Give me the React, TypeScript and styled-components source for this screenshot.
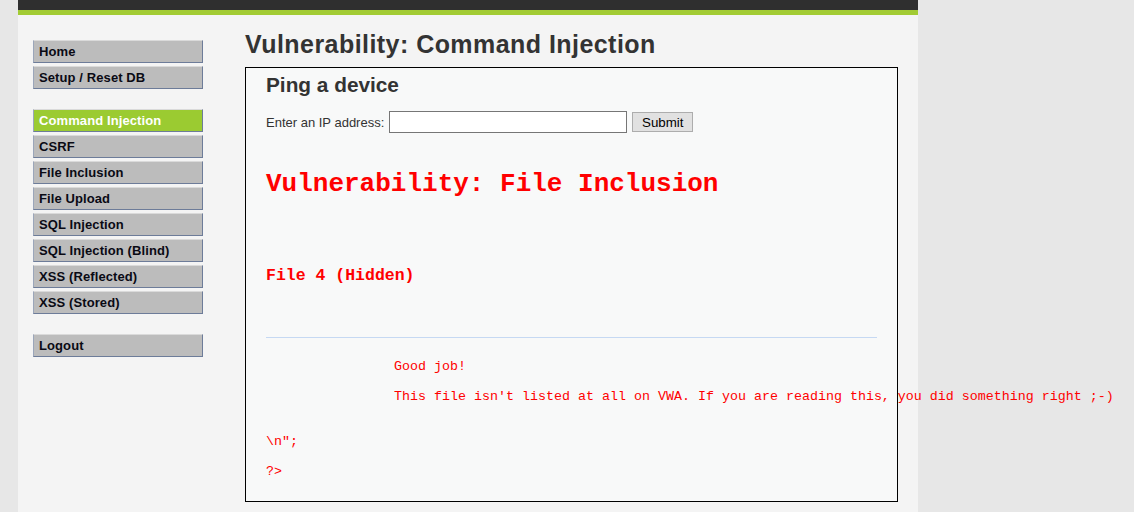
import React from "react";
import styled, { createGlobalStyle } from "styled-components";

const GlobalStyle = createGlobalStyle`
  html, body { margin: 0; padding: 0; }
  body {
    background: #e7e7e7;
    font-family: "Liberation Sans", Arial, Helvetica, sans-serif;
    font-size: 13px;
    color: #333;
  }
`;

const Container = styled.div`
  width: 900px;
  margin-left: 18px;
  min-height: 512px;
  background: #f4f4f4;
`;

const Header = styled.header`
  height: 10px;
  background: #2f2f2f;
  border-bottom: 5px solid #a2cb34;
`;

const Main = styled.div`
  display: flex;
  align-items: flex-start;
`;

const Sidebar = styled.nav`
  width: 200px;
  box-sizing: border-box;
  padding: 25px 15px 0;
  display: flex;
  flex-direction: column;
  gap: 20px;
`;

const MenuGroup = styled.ul`
  list-style: none;
  margin: 0;
  padding: 0;
  display: flex;
  flex-direction: column;
  gap: 3px;
`;

const MenuItem = styled.li<{ $selected?: boolean }>`
  height: 23px;
  box-sizing: border-box;
  line-height: 21px;
  padding-left: 5px;
  border: 1px solid;
  border-color: #dadada #6d7c99 #6d7c99 #9ba6ba;
  background: ${(p) => (p.$selected ? "#9bcb31" : "#bcbcbc")};
  color: ${(p) => (p.$selected ? "#ffffff" : "#0a0a14")};
  font-weight: bold;
  font-size: 13px;
  letter-spacing: 0.1px;
  white-space: nowrap;
`;

const Body = styled.main`
  flex: 1;
  min-width: 0;
  padding: 0 20px 0 27px;
`;

const Title = styled.h1`
  margin: 15px 0 0;
  font-size: 25px;
  letter-spacing: 0.45px;
  line-height: 28px;
  font-weight: bold;
  color: #333;
`;

const Panel = styled.section`
  margin-top: 9px;
  border: 1px solid #000;
  background: #f8f9f9;
  padding: 5px 20px 22px;
`;

const SubTitle = styled.h2`
  margin: 0;
  font-size: 20.8px;
  line-height: 24px;
  font-weight: bold;
  color: #333;
`;

const FormRow = styled.form`
  margin-top: 14px;
  display: flex;
  align-items: center;
  gap: 5px;
  font-size: 13px;
  color: #333;
`;

const TextInput = styled.input`
  width: 238px;
  height: 22px;
  box-sizing: border-box;
  border: 1px solid #767676;
  background: #fff;
  padding: 1px 2px;
  margin: 0;
  font-size: 13px;
`;

const SubmitButton = styled.button`
  width: 61px;
  height: 20px;
  box-sizing: border-box;
  border: 1px solid #adadad;
  background: #e1e1e1;
  color: #000;
  font-family: "Liberation Sans", Arial, sans-serif;
  font-size: 13.33px;
  padding: 0;
  margin: 0;
`;

const RedTitle = styled.div`
  margin-top: 36px;
  font-family: "Liberation Mono", "Courier New", monospace;
  font-weight: bold;
  font-size: 26px;
  line-height: 30px;
  color: #ff0000;
  white-space: pre;
`;

const RedSub = styled.div`
  margin-top: 67px;
  font-family: "Liberation Mono", "Courier New", monospace;
  font-weight: bold;
  font-size: 16.5px;
  line-height: 20px;
  color: #ff0000;
  white-space: pre;
`;

const Divider = styled.div`
  margin-top: 51px;
  border-top: 1px solid #c6d9f3;
`;

const CodeBlock = styled.pre`
  margin: 21px 0 0;
  font-family: "Liberation Mono", "Courier New", monospace;
  font-size: 13.33px;
  line-height: 15px;
  color: #ff0000;
  white-space: pre;
  tab-size: 8;
  overflow: visible;
`;

const menuTop = ["Home", "Setup / Reset DB"];
const menuVulns = [
  "Command Injection",
  "CSRF",
  "File Inclusion",
  "File Upload",
  "SQL Injection",
  "SQL Injection (Blind)",
  "XSS (Reflected)",
  "XSS (Stored)",
];

const codeText =
  "\t\tGood job!\n\n\t\tThis file isn't listed at all on VWA. If you are reading this, you did something right ;-)\n\n\n\\n\";\n\n?>";

export default function App() {
  return (
    <>
      <GlobalStyle />
      <Container>
        <Header />
        <Main>
          <Sidebar>
            <MenuGroup>
              {menuTop.map((m) => (
                <MenuItem key={m}>{m}</MenuItem>
              ))}
            </MenuGroup>
            <MenuGroup>
              {menuVulns.map((m) => (
                <MenuItem key={m} $selected={m === "Command Injection"}>
                  {m}
                </MenuItem>
              ))}
            </MenuGroup>
            <MenuGroup>
              <MenuItem>Logout</MenuItem>
            </MenuGroup>
          </Sidebar>
          <Body>
            <Title>Vulnerability: Command Injection</Title>
            <Panel>
              <SubTitle>Ping a device</SubTitle>
              <FormRow onSubmit={(e) => e.preventDefault()}>
                <span>Enter an IP address:</span>
                <TextInput type="text" />
                <SubmitButton type="submit">Submit</SubmitButton>
              </FormRow>
              <RedTitle>Vulnerability: File Inclusion</RedTitle>
              <RedSub>File 4 (Hidden)</RedSub>
              <Divider />
              <CodeBlock>{codeText}</CodeBlock>
            </Panel>
          </Body>
        </Main>
      </Container>
    </>
  );
}
